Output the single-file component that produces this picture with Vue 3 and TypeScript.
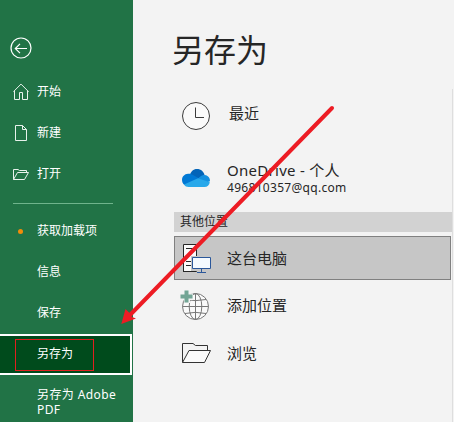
<script setup lang="ts">
interface NavItem {
  label: string
  icon?: 'home' | 'new' | 'open' | 'dot'
  active?: boolean
  wide?: boolean
}

const primary: NavItem[] = [
  { label: '开始', icon: 'home' },
  { label: '新建', icon: 'new' },
  { label: '打开', icon: 'open' },
]

const secondary: NavItem[] = [
  { label: '获取加载项', icon: 'dot' },
  { label: '信息' },
  { label: '保存' },
  { label: '另存为', active: true },
  { label: '另存为 Adobe PDF', wide: true },
]
</script>

<template>
  <div class="backstage">
    <aside class="sidebar">
      <button class="back" aria-label="返回">
        <svg width="22" height="22" viewBox="0 0 22 22" fill="none" stroke="#fff">
          <circle cx="11" cy="11" r="10" stroke-width="1.2" />
          <path d="M17 11.5H5.5M10 6.8L5.3 11.5L10 16.2" stroke-width="1.2" />
        </svg>
      </button>
      <nav>
        <a v-for="item in primary" :key="item.label" class="item primary">
          <span class="glyph">
            <svg v-if="item.icon === 'home'" width="16" height="17" viewBox="0 0 16 17" fill="none" stroke="#e8f2ec">
              <path d="M.4 8.7L8 1.1L15.6 8.7M1.5 7.8V16.5H6.5V9.5H9.5V16.5H14.5V7.8" />
            </svg>
            <svg v-else-if="item.icon === 'new'" width="16" height="17" viewBox="0 0 16 17" fill="none" stroke="#e8f2ec">
              <path d="M2.5 1.5H9.5L13.5 5.5V16.5H2.5ZM9.5 1.5V5.5H13.5" />
            </svg>
            <svg v-else width="16" height="17" viewBox="0 0 16 17" fill="none" stroke="#e8f2ec">
              <path d="M.5 14.5V4.5H5L6.5 5.5H13.5V7.5M.5 14.5L4.5 7.5H15.5L11.5 14.5Z" />
            </svg>
          </span>
          <span class="label">{{ item.label }}</span>
        </a>
        <hr class="divider" />
        <a v-for="item in secondary" :key="item.label" class="item" :class="{ active: item.active, wide: item.wide }">
          <span class="glyph"><i v-if="item.icon === 'dot'" class="dot"></i></span>
          <span class="label">{{ item.label }}</span>
          <span v-if="item.active" class="mark"></span>
        </a>
      </nav>
    </aside>

    <main class="content">
      <h1>另存为</h1>
      <section class="places">
        <div class="place recent">
          <svg class="picture" width="30" height="30" viewBox="0 0 30 30">
            <circle cx="15" cy="15" r="13.5" fill="#fafafa" stroke="#3b3b3b" />
            <path d="M14.5 6.5V16.5H23" fill="none" stroke="#3b3b3b" />
          </svg>
          <span class="name">最近</span>
        </div>
        <div class="place onedrive">
          <svg class="picture" width="30" height="20" viewBox="0 0 30 20">
            <path d="M9 6.5C10.5 2.5 13 1 16 1C20 1 22.8 3.7 23.5 7L17 11L9 6.5Z" fill="#0364b8" />
            <path d="M6 18C3 17.5 1 15 1 12C1 8.7 3.5 6 7 5.8C9 5.5 11 6.2 12.5 7.2L19 11L6 18Z" fill="#0078d4" />
            <path d="M17 10.5L20 8C22 6.7 25 6.8 26.8 8.3C28.5 9.7 29 11.5 29 13.2L24 15L17 10.5Z" fill="#1490df" />
            <path d="M3 16.5L17 10.2L28.8 14.3C28.3 17.3 26.3 19 23.5 19H7.5C5.6 19 4 18.2 3 16.5Z" fill="#28a8ea" />
          </svg>
          <div class="account">
            <span class="name">OneDrive - 个人</span>
            <span class="mail">496810357@qq.com</span>
          </div>
        </div>
        <h2>其他位置</h2>
        <div class="place computer">
          <svg class="picture" width="30" height="32" viewBox="0 0 30 32">
            <path d="M1.5 2.5H14.5V29.5H1.5Z" fill="#fafafa" stroke="#262626" />
            <path d="M4 6.5H12M4 19.5H9M4 23.5H9" stroke="#262626" />
            <path d="M9 14H30V28H15V29H9Z" fill="#c6c6c6" />
            <path d="M1 29.5H14" stroke="#262626" />
            <path d="M10.5 15.5H28.5V26.5H10.5Z" fill="#f5faff" stroke="#2b579a" />
            <path d="M19.5 27V30.5M15 30.5H24" stroke="#2b579a" fill="none" />
          </svg>
          <span class="name">这台电脑</span>
        </div>
        <div class="place add">
          <svg class="picture" width="30" height="32" viewBox="0 0 30 32">
            <g fill="none" stroke="#777">
              <circle cx="15.5" cy="16.5" r="13" fill="#fafafa" />
              <ellipse cx="15.5" cy="16.5" rx="6.3" ry="13" />
              <path d="M15.5 3.5V29.5M2.5 16.5H28.5M5 9.5Q15.5 11.8 26 9.5M5 23.5Q15.5 21.2 26 23.5" />
            </g>
            <path d="M4 0H10V3.5H13V10H10V13H4V10H0V3.5H4Z" fill="#f3f3f3" />
            <path d="M4.5 .5H8.5V4.5H12.5V8.5H8.5V12.5H4.5V8.5H.5V4.5H4.5Z" fill="#73a595" />
          </svg>
          <span class="name">添加位置</span>
        </div>
        <div class="place browse">
          <svg class="picture" width="31" height="22" viewBox="0 0 31 22" fill="none" stroke="#333">
            <path d="M1.5 20.5V1.5H12L14.5 3.5H26.5V8.5" />
            <path d="M1.5 20.5L8 8.5H29.5L23.5 20.5Z" fill="#fafafa" />
          </svg>
          <span class="name">浏览</span>
        </div>
      </section>
    </main>

    <svg class="arrow" width="454" height="422" viewBox="0 0 454 422">
      <path d="M332 108L130 315" stroke="#ed1c24" stroke-width="4" stroke-linecap="round" />
      <path d="M121.3 324L125.5 309L129.5 313L132 317L136 318.5Z" fill="#ed1c24" />
    </svg>
  </div>
</template>

<style>
body {
  margin: 0;
}
</style>

<style scoped>
.backstage {
  position: relative;
  display: flex;
  width: 454px;
  height: 422px;
  overflow: hidden;
  background: #f3f3f3;
  color: #262626;
  font-family: "Noto Sans", "Noto Sans CJK SC", sans-serif;
}

.sidebar {
  flex: none;
  box-sizing: border-box;
  width: 133px;
  height: 422px;
  padding-top: 37px;
  background: #217346;
  color: #fff;
}

.back {
  display: block;
  width: 22px;
  height: 22px;
  margin: 0 0 12px 10px;
  padding: 0;
  border: 0;
  background: none;
}

.back svg {
  display: block;
}

.item {
  position: relative;
  box-sizing: border-box;
  display: flex;
  align-items: flex-start;
  width: 132px;
  height: 41px;
  padding: 12px 10px 0 13px;
  font-size: 12px;
  line-height: 15px;
}

.primary .label {
  padding-top: 1px;
}

.wide .label {
  letter-spacing: 0.4px;
}

.glyph {
  flex: none;
  display: flex;
  align-items: center;
  justify-content: center;
  width: 16px;
  height: 17px;
  margin-right: 8px;
}

.dot {
  width: 5px;
  height: 5px;
  margin-right: 2px;
  border-radius: 50%;
  background: #f28c0a;
}

.divider {
  height: 1px;
  margin: 9px 20px 7px 13px;
  border: 0;
  background: #6fb48c;
}

.item.wide {
  padding-right: 6px;
}

.active {
  padding-top: 10px;
  border: 2px solid #fff;
  border-left: 0;
  background: #004b1c;
}

.mark {
  position: absolute;
  top: 3px;
  left: 15px;
  box-sizing: border-box;
  width: 79px;
  height: 32px;
  border: 1px solid #e02020;
}

.content {
  flex: 1;
  padding-left: 41px;
}

h1 {
  margin: 26px 0 15px -2px;
  font-size: 32px;
  font-weight: 400;
  line-height: 48px;
}

.places {
  box-sizing: border-box;
  width: 279px;
  height: 333px;
  border-right: 1px solid #dedede;
}

.place {
  box-sizing: border-box;
  display: flex;
  align-items: center;
  padding-left: 7px;
  font-size: 15px;
}

.picture {
  flex: none;
}

.name {
  line-height: 20px;
}

.recent {
  height: 54px;
  gap: 18px;
}

.recent .name {
  margin-top: -6px;
}

.onedrive {
  height: 69px;
  gap: 16px;
}

.account {
  display: flex;
  flex-direction: column;
}

.account .name {
  letter-spacing: 0.28px;
}

.mail {
  font-size: 12px;
  letter-spacing: 0.3px;
  line-height: 16px;
}

h2 {
  height: 20px;
  margin: 0 0 4px;
  padding-left: 6px;
  background: #d2d2d2;
  font-size: 12px;
  font-weight: 400;
  line-height: 20px;
}

.computer {
  width: 277px;
  height: 44px;
  gap: 15px;
  border: 1px solid #808080;
  background: #c6c6c6;
}

.computer .name {
  margin-top: -1px;
}

.add {
  height: 50px;
  gap: 16px;
  padding-left: 6px;
}

.add .picture {
  margin-top: 1px;
  margin-right: 1px;
}

.browse {
  height: 46px;
  gap: 15px;
}

.arrow {
  position: absolute;
  inset: 0;
  pointer-events: none;
}
</style>
